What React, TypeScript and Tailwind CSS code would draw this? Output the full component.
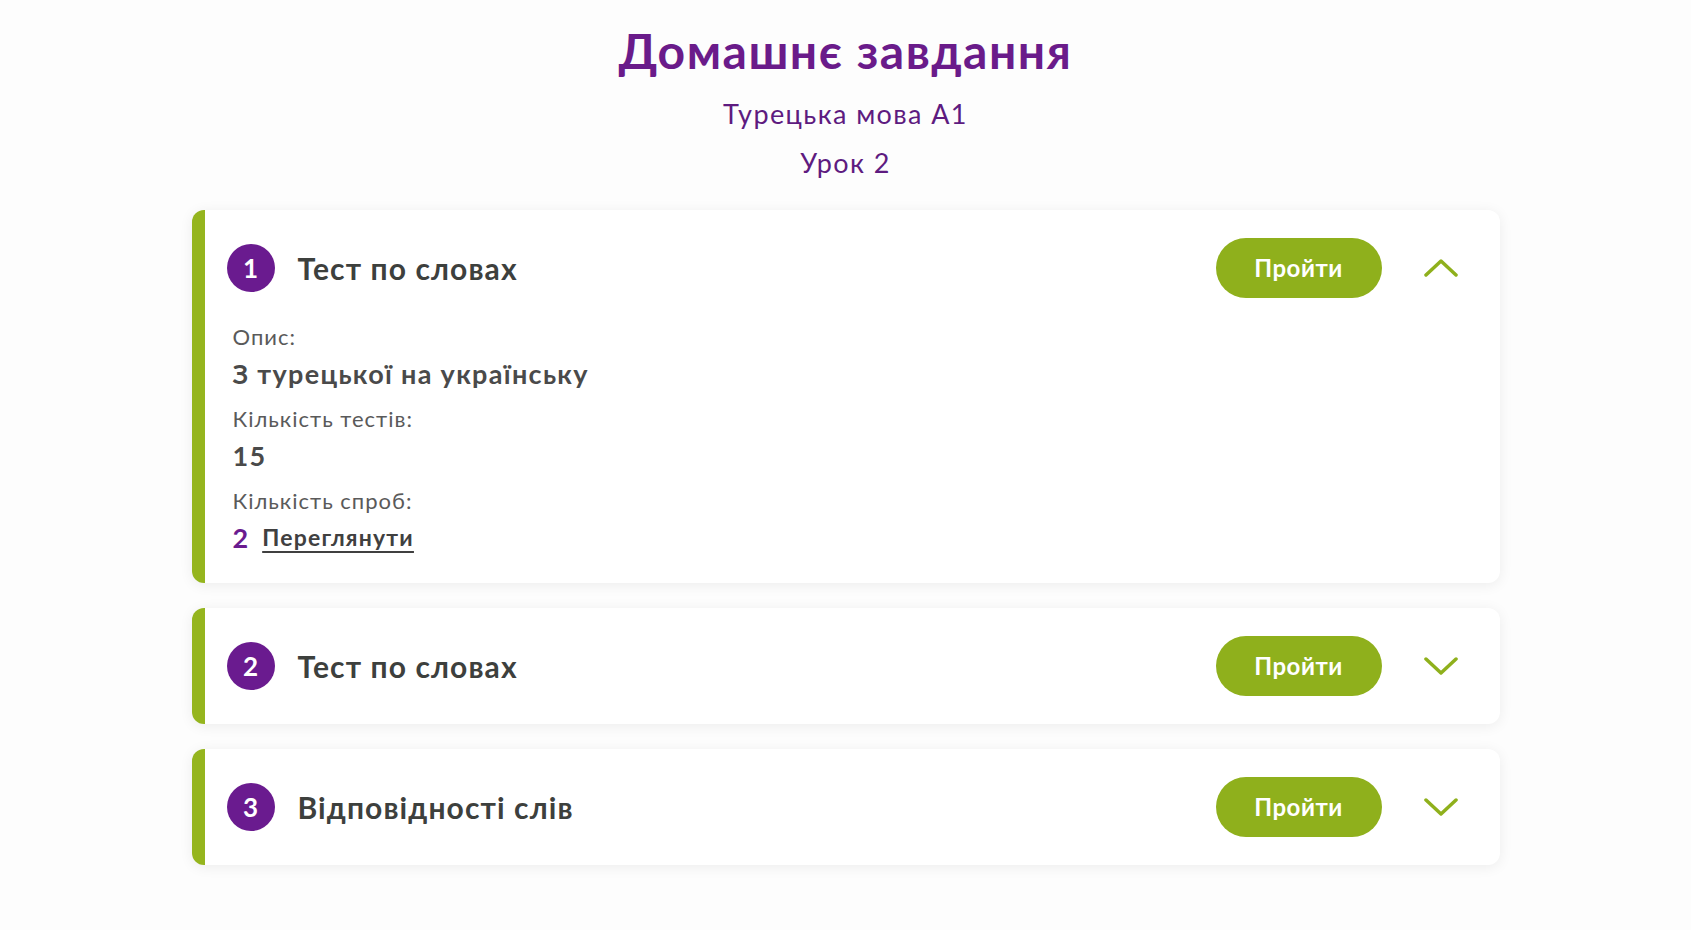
import { useState } from 'react';

const tasks = [
  { id: 1, title: 'Тест по словах', desc: 'З турецької на українську', tests: 15, attempts: 2 },
  { id: 2, title: 'Тест по словах', desc: 'З турецької на українську', tests: 15, attempts: 0 },
  { id: 3, title: 'Відповідності слів', desc: 'Знайдіть пари', tests: 10, attempts: 0 },
];

function Chevron({ up }: { up: boolean }) {
  return (
    <svg width="34" height="20" viewBox="0 0 34 20" fill="none" aria-hidden="true">
      <polyline
        points={up ? '2,17 17,3 32,17' : '2,3 17,17 32,3'}
        stroke="#8fb01c"
        strokeWidth="3.5"
        strokeLinecap="round"
        strokeLinejoin="round"
      />
    </svg>
  );
}

export default function App() {
  const [open, setOpen] = useState<number | null>(1);

  return (
    <main
      className="min-h-screen bg-[#fdfdfd] pt-[22px] pb-16"
      style={{ fontFamily: 'Lato, "Open Sans", "Noto Sans", sans-serif' }}
    >
      <h1 className="text-center text-[48px] leading-[58px] font-bold tracking-[1.5px] text-[#6a1b8a]">
        Домашнє завдання
      </h1>
      <p className="mt-[17px] text-center text-[27px] leading-[34px] tracking-[1.4px] text-[#5e1b80]">
        Турецька мова А1
      </p>
      <p className="mt-[15px] text-center text-[27px] leading-[34px] tracking-[1.4px] text-[#5e1b80]">Урок 2</p>

      <div className="mx-auto mt-[30px] flex w-[1308px] flex-col gap-[25px]">
        {tasks.map(t => {
          const isOpen = open === t.id;
          return (
            <section
              key={t.id}
              className="rounded-[12px] border-l-[13px] border-[#95b51e] bg-white shadow-[0_2px_14px_rgba(0,0,0,0.07)]"
            >
              <div className="flex h-[116px] items-center pl-[22px] pr-[42px]">
                <span className="flex h-[48px] w-[48px] items-center justify-center rounded-full bg-[#6a1b8f] text-[26px] font-bold text-white">
                  {t.id}
                </span>
                <h2 className="ml-[23px] flex-1 text-[30px] font-bold tracking-[1.1px] text-[#3d403d]">{t.title}</h2>
                <button
                  type="button"
                  className="flex h-[60px] w-[166px] items-center justify-center rounded-full bg-[#8fb01c] text-[24px] font-bold tracking-[0.5px] text-white"
                >
                  Пройти
                </button>
                <button
                  type="button"
                  onClick={() => setOpen(isOpen ? null : t.id)}
                  className="ml-[42px] flex h-[40px] w-[34px] items-center justify-center"
                  aria-expanded={isOpen}
                >
                  <Chevron up={isOpen} />
                </button>
              </div>

              {isOpen && (
                <div className="-mt-[8px] pb-[27px] pl-[28px] text-[#4a4a4a]">
                  <p className="text-[22px] leading-[37px] tracking-[1px] text-[#5a5a5a]">Опис:</p>
                  <p className="text-[27px] leading-[37px] font-bold tracking-[1.3px]">{t.desc}</p>
                  <p className="mt-[8px] text-[22px] leading-[37px] tracking-[1px] text-[#5a5a5a]">Кількість тестів:</p>
                  <p className="text-[27px] leading-[37px] font-bold tracking-[1.3px]">{t.tests}</p>
                  <p className="mt-[8px] text-[22px] leading-[37px] tracking-[1px] text-[#5a5a5a]">Кількість спроб:</p>
                  <p className="flex items-center gap-[14px] leading-[37px]">
                    <span className="text-[27px] font-bold text-[#6a1b8f]">{t.attempts}</span>
                    <a
                      href="#"
                      className="text-[23px] font-bold tracking-[1.2px] text-[#404040] underline underline-offset-[5px] decoration-[1.5px]"
                    >
                      Переглянути
                    </a>
                  </p>
                </div>
              )}
            </section>
          );
        })}
      </div>
    </main>
  );
}
